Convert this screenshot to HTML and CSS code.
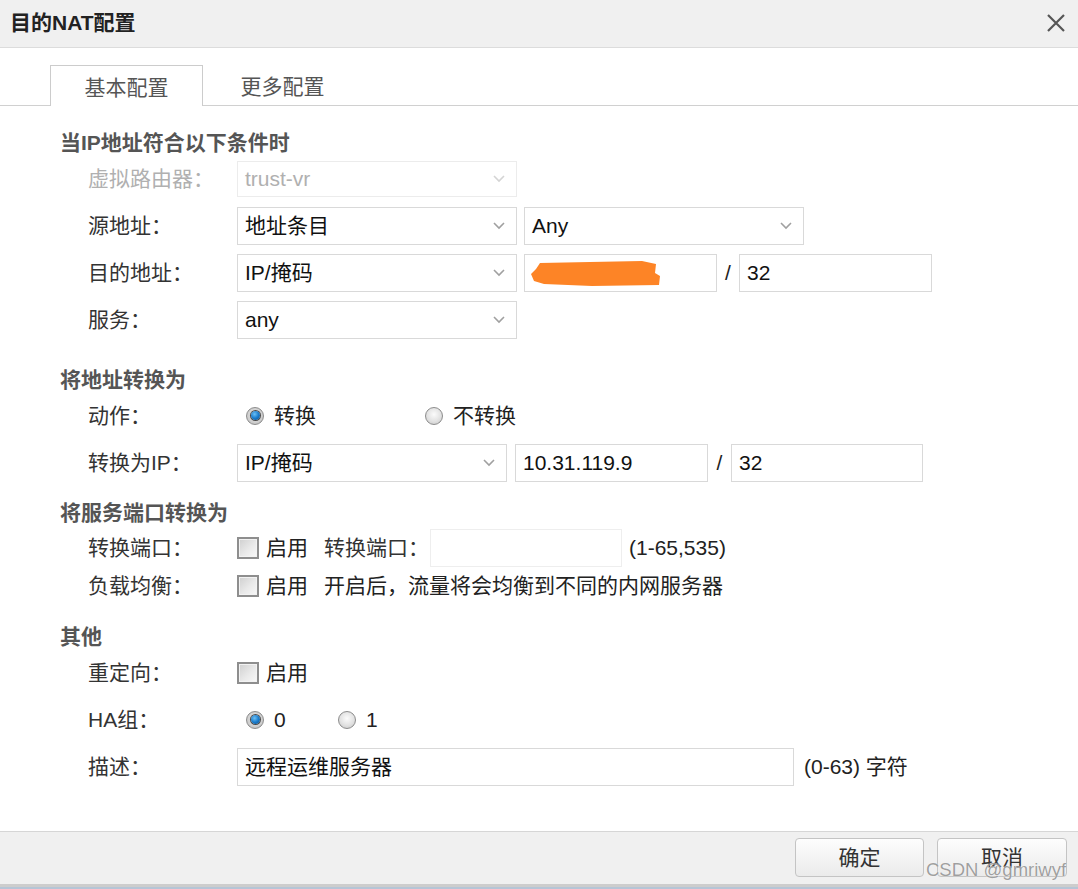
FILE: index.html
```html
<!DOCTYPE html>
<html lang="zh-CN">
<head>
<meta charset="utf-8">
<title>目的NAT配置</title>
<link rel="stylesheet" href="styles.css">
</head>
<body>
<div class="dialog">
  <div class="titlebar">
    <span class="title">目的NAT配置</span>
    <svg class="close" viewBox="0 0 20 20" width="20" height="20"><path d="M2 2 L18 18 M18 2 L2 18" stroke="#555" stroke-width="2.2" fill="none"/></svg>
  </div>
  <div class="tabs">
    <div class="tab active">基本配置</div>
    <div class="tab second">更多配置</div>
  </div>
  <div class="body">
    <div class="sec">当IP地址符合以下条件时</div>
    <div class="row">
      <span class="label disabled">虚拟路由器：</span>
      <div class="box select w280 h36 dis"><span>trust-vr</span><svg class="chev" viewBox="0 0 12 8" width="12" height="8"><path d="M1 1 L6 6 L11 1" stroke="#d4d4d4" stroke-width="1.6" fill="none"/></svg></div>
    </div>
    <div class="row">
      <span class="label">源地址：</span>
      <div class="box select w280"><span>地址条目</span><svg class="chev" viewBox="0 0 12 8" width="12" height="8"><path d="M1 1 L6 6 L11 1" stroke="#a0a0a0" stroke-width="1.6" fill="none"/></svg></div>
      <div class="box select w280 ml7"><span>Any</span><svg class="chev" viewBox="0 0 12 8" width="12" height="8"><path d="M1 1 L6 6 L11 1" stroke="#a0a0a0" stroke-width="1.6" fill="none"/></svg></div>
    </div>
    <div class="row">
      <span class="label">目的地址：</span>
      <div class="box select w280"><span>IP/掩码</span><svg class="chev" viewBox="0 0 12 8" width="12" height="8"><path d="M1 1 L6 6 L11 1" stroke="#a0a0a0" stroke-width="1.6" fill="none"/></svg></div>
      <div class="box w193 ml7"><svg class="redact" viewBox="0 0 132 28" width="132" height="28"><path d="M10 4 L60 3 L112 2 L126 5 L125 14 L130 17 L129 26 L62 27 L14 25 L4 22 L1 15 L6 10 Z" fill="#fd8426"/></svg></div>
      <span class="slash">/</span>
      <div class="box w193">32</div>
    </div>
    <div class="row">
      <span class="label">服务：</span>
      <div class="box select w280"><span>any</span><svg class="chev" viewBox="0 0 12 8" width="12" height="8"><path d="M1 1 L6 6 L11 1" stroke="#a0a0a0" stroke-width="1.6" fill="none"/></svg></div>
    </div>

    <div class="sec s2">将地址转换为</div>
    <div class="row">
      <span class="label">动作：</span>
      <div class="opt wide"><span class="radio on"></span><span>转换</span></div>
      <div class="opt"><span class="radio"></span><span>不转换</span></div>
    </div>
    <div class="row">
      <span class="label">转换为IP：</span>
      <div class="box select w270"><span>IP/掩码</span><svg class="chev" viewBox="0 0 12 8" width="12" height="8"><path d="M1 1 L6 6 L11 1" stroke="#a0a0a0" stroke-width="1.6" fill="none"/></svg></div>
      <div class="box w193 ml8">10.31.119.9</div>
      <span class="slash w23">/</span>
      <div class="box w192">32</div>
    </div>

    <div class="sec s3">将服务端口转换为</div>
    <div class="row sm first">
      <span class="label">转换端口：</span>
      <span class="check"></span><span class="chk-text">启用</span>
      <span class="sub-label">转换端口：</span>
      <div class="box w192 light"></div>
      <span class="hint">(1-65,535)</span>
    </div>
    <div class="row sm">
      <span class="label">负载均衡：</span>
      <span class="check"></span><span class="chk-text">启用</span>
      <span class="note">开启后，流量将会均衡到不同的内网服务器</span>
    </div>

    <div class="sec s4">其他</div>
    <div class="row">
      <span class="label">重定向：</span>
      <span class="check"></span><span class="chk-text">启用</span>
    </div>
    <div class="row">
      <span class="label">HA组：</span>
      <div class="opt narrow"><span class="radio on"></span><span>0</span></div>
      <div class="opt"><span class="radio"></span><span>1</span></div>
    </div>
    <div class="row">
      <span class="label">描述：</span>
      <div class="box w557">远程运维服务器</div>
      <span class="hint">(0-63) 字符</span>
    </div>
  </div>
  <div class="footer">
    <div class="btn">确定</div>
    <div class="btn w130">取消</div>
  </div>
  <div class="strip"></div>
  <div class="watermark">CSDN @gmriwyf</div>
</div>
</body>
</html>
```

FILE: styles.css
```css
* { box-sizing: border-box; }

body {
  margin: 0;
  font-family: "Liberation Sans", "Noto Sans CJK SC", sans-serif;
  font-size: 21px;
  color: #333;
  background: #fff;
}

.dialog {
  width: 1078px;
  height: 889px;
  display: flex;
  flex-direction: column;
  position: relative;
  overflow: hidden;
  background: #fff;
}

.titlebar {
  height: 48px;
  flex: none;
  background: #f0f0f0;
  border-bottom: 1px solid #dcdcdc;
  display: flex;
  align-items: center;
  justify-content: space-between;
  padding: 0 12px 2px 10px;
}

.title {
  font-weight: bold;
  font-size: 21px;
  color: #222;
  line-height: 28px;
}

.close { display: block; }

.tabs {
  margin-top: 17px;
  height: 41px;
  flex: none;
  border-bottom: 1px solid #d0d0d0;
  display: flex;
  padding-left: 50px;
}

.tab {
  width: 153px;
  height: 40px;
  line-height: 44px;
  text-align: center;
  color: #555;
  font-size: 21px;
}

.tab.active {
  background: #fff;
  border: 1px solid #cccccc;
  border-bottom: none;
  height: 41px;
  margin-bottom: -1px;
}

.tab.second { margin-left: 3px; }

.body {
  flex: 1;
  padding-top: 23px;
}

.sec {
  height: 26px;
  line-height: 28px;
  font-weight: bold;
  color: #555;
  padding-left: 60px;
  font-size: 21px;
}
.sec.s2 { margin-top: 23px; }
.sec.s3 { margin-top: 13px; }
.sec.s4 { margin-top: 18px; }

.row {
  height: 47px;
  display: flex;
  align-items: center;
  padding-left: 88px;
  line-height: 30px;
}
.row.sm { height: 38px; }
.row.first { margin-top: 4px; }

.label {
  width: 149px;
  flex: none;
  color: #333;
}
.label.disabled { color: #b0b0b0; }

.box {
  height: 38px;
  border: 1px solid #d9d9d9;
  display: flex;
  align-items: center;
  padding-left: 7px;
  color: #111;
  background: #fff;
  flex: none;
}
.box.h36 { height: 36px; }
.box.dis { border-color: #ececec; color: #b0b0b0; }
.box.light { border-color: #eeeeee; }
.select {
  justify-content: space-between;
  padding-right: 11px;
}
.chev { display: block; }

.w280 { width: 280px; }
.w270 { width: 270px; }
.w193 { width: 193px; }
.w192 { width: 192px; }
.w557 { width: 557px; }
.ml7 { margin-left: 7px; }
.ml8 { margin-left: 8px; }

.slash {
  width: 22px;
  text-align: center;
  color: #222;
  flex: none;
}
.slash.w23 { width: 23px; }

.redact {
  display: block;
  margin-left: -2px;
  margin-top: 1px;
}

.opt {
  display: flex;
  align-items: center;
  gap: 10px;
  color: #222;
}
.opt.wide { width: 179px; margin-left: 9px; }
.opt.narrow { width: 92px; margin-left: 9px; }

.radio {
  width: 18px;
  height: 18px;
  border-radius: 50%;
  border: 1px solid #8c8c8c;
  background: radial-gradient(circle at 50% 40%, #fbfbfb 0%, #e2e2e2 55%, #c4c4c4 100%);
  position: relative;
  flex: none;
}
.radio.on {
  background: radial-gradient(circle at 50% 45%, #e9e9e9 0%, #cfcfcf 60%, #b0b0b0 100%);
}
.radio.on::after {
  content: "";
  position: absolute;
  left: 3.5px;
  top: 3.5px;
  width: 9px;
  height: 9px;
  border-radius: 50%;
  background: radial-gradient(circle at 40% 35%, #6cc0f5 0%, #1a7ccc 50%, #0b4f8c 100%);
  box-shadow: 0 0 0 1px #4a4a4a;
}

.check {
  width: 22px;
  height: 22px;
  border: 2px solid #8e8e8e;
  background: linear-gradient(135deg, #cfcfcf 0%, #e9e9e9 55%, #f8f8f8 100%);
  box-shadow: inset 0 0 0 1px #f2f2f2;
  flex: none;
}
.chk-text {
  margin-left: 7px;
  width: 58px;
  flex: none;
  color: #222;
}
.sub-label {
  width: 106px;
  flex: none;
  color: #333;
}
.hint {
  margin-left: 7px;
  color: #222;
}
.row .box.w557 + .hint { margin-left: 10px; }
.note { color: #222; }

.footer {
  height: 53px;
  flex: none;
  border-top: 1px solid #d6d6d6;
  background: #f0f0f0;
  display: flex;
  justify-content: flex-end;
  align-items: flex-start;
  gap: 13px;
  padding: 6px 11px 0 0;
}

.btn {
  width: 129px;
  height: 39px;
  border: 1px solid #c4c4c4;
  border-radius: 4px;
  background: linear-gradient(#fdfdfd, #ebebeb);
  display: flex;
  align-items: center;
  justify-content: center;
  padding-bottom: 3px;
  color: #333;
  font-size: 21px;
}
.btn.w130 { width: 130px; }

.strip {
  height: 5px;
  flex: none;
  background: linear-gradient(#cdcdcd 0, #cdcdcd 3px, #b6c5d6 3px, #b6c5d6 5px);
}

.watermark {
  position: absolute;
  left: 926px;
  top: 859px;
  font-family: "Liberation Sans", sans-serif;
  font-size: 18.5px;
  color: rgba(95, 95, 95, 0.6);
  text-shadow: 0 0 1px #fff;
  pointer-events: none;
}
```
